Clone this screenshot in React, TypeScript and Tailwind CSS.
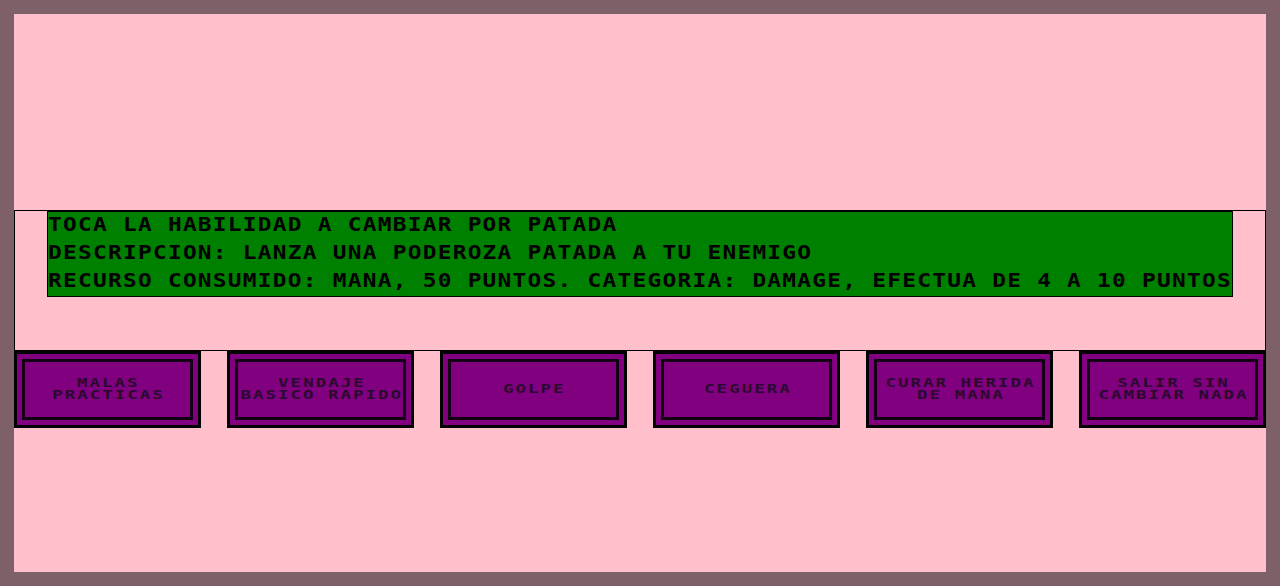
const labels: string[][] = [
  ["MALAS", "PRACTICAS"],
  ["VENDAJE", "BASICO RAPIDO"],
  ["GOLPE"],
  ["CEGUERA"],
  ["CURAR HERIDA", "DE MANA"],
  ["SALIR SIN", "CAMBIAR NADA"],
];

const info = [
  "TOCA LA HABILIDAD A CAMBIAR POR PATADA",
  "DESCRIPCION: LANZA UNA PODEROZA PATADA A TU ENEMIGO",
  "RECURSO CONSUMIDO: MANA, 50 PUNTOS. CATEGORIA: DAMAGE, EFECTUA DE 4 A 10 PUNTOS",
];

const mono = { fontFamily: '"DejaVu Sans Mono", "Liberation Mono", monospace' };

function SkillButton({ lines }: { lines: string[] }) {
  return (
    <button className="w-[187px] h-[77px] border-[3px] border-black bg-[#800080] p-[5px] cursor-pointer">
      <div className="h-full w-full border-[3px] border-[#140014] flex flex-col items-center justify-center">
        {lines.map((l) => (
          <span
            key={l}
            className="block whitespace-nowrap text-[12px] leading-[12px] font-bold tracking-[1.4px] pl-[1.4px] text-[#2a0a2e] scale-x-[1.45] -translate-y-[1px]"
            style={mono}
          >
            {l}
          </span>
        ))}
      </div>
    </button>
  );
}

export default function App() {
  return (
    <div className="w-[1280px] h-[586px] bg-[#7d6068] p-[14px]">
      <div className="h-full w-full bg-[#ffc0cb] flex flex-col">
        {/* empty stage area */}
        <div className="h-[196px]" />

        {/* skill info panel */}
        <div className="h-[141px] border border-black">
          <div className="mx-[32px] bg-[#008000] border border-black" style={mono}>
            {info.map((t) => (
              <div key={t} className="h-[28px]">
                <div className="w-max text-[19px] leading-[28px] font-bold tracking-[1.05px] text-black whitespace-nowrap origin-left scale-x-[1.2] -translate-y-[2px]">
                  {t}
                </div>
              </div>
            ))}
          </div>
        </div>

        {/* skill slots */}
        <div className="flex justify-between">
          {labels.map((l) => (
            <SkillButton key={l.join(" ")} lines={l} />
          ))}
        </div>
      </div>
    </div>
  );
}
